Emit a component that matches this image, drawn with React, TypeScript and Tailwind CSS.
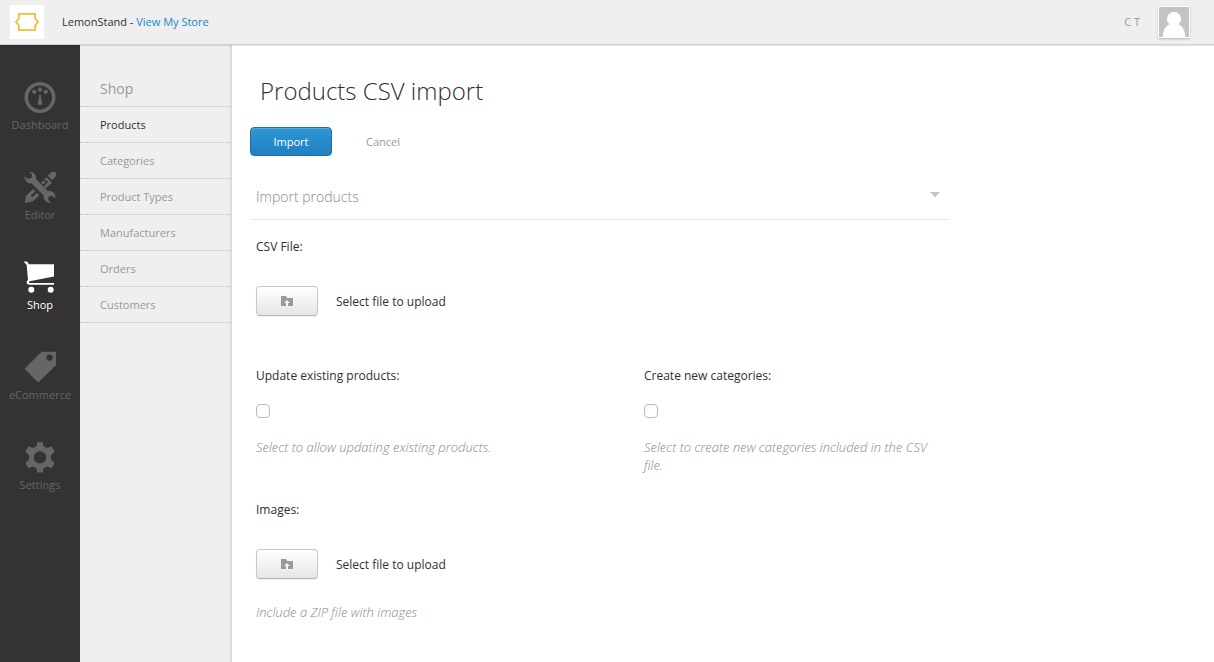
import { useState, type ReactNode } from "react";

function DashboardIcon() {
  return (
    <svg viewBox="0 0 32 32" className="size-8" fill="currentColor" aria-hidden="true">
      <circle cx="16" cy="16.500" r="13.700" fill="none" stroke="currentColor" strokeWidth="3.600" />
      <circle cx="10.200" cy="10.800" r="2.100" />
      <circle cx="16" cy="8.600" r="2.100" />
      <circle cx="21.800" cy="10.800" r="2.100" />
      <path d="M15.300 13.500h1.400l1.800 10.300h-5z" />
    </svg>
  );
}

function EditorIcon() {
  return (
    <svg viewBox="0 0 32 32" className="size-8" fill="currentColor" aria-hidden="true">
      <path d="M5 .8C10 .6 12.800 4.500 12 8L24.200 20.200C28.500 19.300 32.200 22.500 31.400 27.600L28.200 24.700 24.700 25.700 24 28.900 27.200 31.600C22 32.400 18.800 28.300 19.700 24.500L7.500 12.300C3.800 13 .2 9.600.6 5L3.900 8 7.300 7.100 8.100 3.800z" />
      <path d="M9 18L11.200 20.200 6.700 24.700 8.300 26.300 12.800 21.800 15.300 24.300 9 30.200.6 32 2.200 24.800z" />
      <path d="M17 11.400L19.200 9.200 21.400 11.400 22.400 10.400 20.200 8.200 22.400 6 28 11.600 21.800 17.200 19.800 15.200 24.200 10.800 23 9.600 19.200 13.600z" />
      <path d="M23.700 4.700L26.400 2C28.200.5 32 .5 32 1.700c.3 1.700 0 3.700-1.200 4.900L29.300 8.500 27.600 8.700z" />
    </svg>
  );
}

function CartIcon() {
  return (
    <svg viewBox="0 0 32 32" className="size-8" fill="currentColor" aria-hidden="true">
      <path d="M.5.300C3 .5 4.400 1.200 4.700 3.200H30v12.200L5.700 20.200c-1.200 1-.8 1.900.3 1.900h24v1.700H5.500c-3 0-3.800-3.100-1.500-4.700L2.700 4.500C2.500 3 1.700 2.400.4 2.100z" />
      <circle cx="7.300" cy="28.800" r="3" />
      <circle cx="26.700" cy="28.800" r="3" />
    </svg>
  );
}

function TagIcon() {
  return (
    <svg viewBox="0 0 32 32" className="size-8" fill="currentColor" aria-hidden="true">
      <path fillRule="evenodd" d="M17.500.8H32v13.400L14.200 31.600.5 17.800zM25.600 3.500a3.100 3.100 0 1 0 0 6.200 3.100 3.100 0 0 0 0-6.200z" />
    </svg>
  );
}

function GearIcon() {
  return (
    <svg viewBox="0 0 32 32" className="size-8" fill="currentColor" aria-hidden="true">
      <path
        fillRule="evenodd"
        d="M13.400 1.100h5.200l.8 3.500c.5 1.400 2.800 2.700 4.300 2.200l4-1.300 3 5.200-3 2.700c-1.300 1.200-1.300 4.600 0 5.800l3 2.700-3 5.200-4-1.300c-1.500-.5-3.800.8-4.300 2.200l-.8 3.500h-5.200l-.8-3.500c-.5-1.400-2.800-2.700-4.300-2.200l-4 1.300-3-5.200 3-2.700c1.300-1.200 1.300-4.600 0-5.800l-3-2.700 3-5.200 4 1.300c1.500.5 3.800-.8 4.300-2.200zM16 10.200a6.200 6.200 0 1 0 0 12.400 6.200 6.200 0 0 0 0-12.400z"
      />
    </svg>
  );
}

function FolderUploadIcon() {
  return (
    <svg viewBox="0 0 12 11" width="12" height="11" aria-hidden="true">
      <path d="M0 0h5l1 2h6v8H0z" fill="#999" />
      <path d="M6 4l3 3H7v3H5V7H3z" fill="#f4f4f4" />
    </svg>
  );
}

const mainItems: { label: string; icon: ReactNode }[] = [
  { label: "Dashboard", icon: <DashboardIcon /> },
  { label: "Editor", icon: <EditorIcon /> },
  { label: "Shop", icon: <CartIcon /> },
  { label: "eCommerce", icon: <TagIcon /> },
  { label: "Settings", icon: <GearIcon /> },
];

const shopItems = ["Products", "Categories", "Product Types", "Manufacturers", "Orders", "Customers"];

function UploadField({ id, label }: { id: string; label: string }) {
  return (
    <div role="group" aria-labelledby={id}>
      <h3 id={id} className="text-xs leading-[18px]">{label}</h3>
      <div className="mt-[30px] flex items-center gap-[18px]">
        <button
          type="button"
          aria-label="Select file to upload"
          className="flex h-[30px] w-[62px] items-center justify-center rounded border border-[#c8c8c8] border-b-[#b4b4b4] bg-linear-to-b from-white to-[#e6e6e6] shadow-[0_1px_1px_rgba(0,0,0,0.06)]"
        >
          <FolderUploadIcon />
        </button>
        <span className="pt-0.5 text-xs leading-4">Select file to upload</span>
      </div>
    </div>
  );
}

function CheckField({ id, label, hint }: { id: string; label: string; hint: string }) {
  return (
    <div>
      <label htmlFor={id} className="block text-xs leading-4">{label}</label>
      <input
        id={id}
        type="checkbox"
        className="mt-5 block size-3.5 appearance-none rounded border border-[#bbb] bg-white checked:bg-[#2183c4]"
      />
      <p className="mt-5 text-[13px] leading-[18px] font-light text-[#888] italic">{hint}</p>
    </div>
  );
}

export default function App() {
  const [open, setOpen] = useState(true);
  return (
    <div className="flex min-h-screen flex-col bg-white font-['Open_Sans',sans-serif] text-[#303030]">
      <header className="z-10 flex h-[45px] items-center border-b border-[#d0d0d0] bg-[#efefef] pr-6 pl-2.5 shadow-[0_1px_1px_rgba(0,0,0,0.1)]">
        <div className="flex size-[34px] items-center justify-center bg-white">
          <svg viewBox="0 0 24 20" width="24" height="20" fill="none" stroke="#f0bf35" strokeWidth="1.800" aria-hidden="true">
            <path d="M3.900 1.900h16.200v4.600L23 10l-2.900 3.500v4.600H3.900v-4.600L1 10l2.900-3.500z" />
          </svg>
        </div>
        <p className="ml-[18px] text-[11px] leading-4">
          LemonStand - <a href="#store" className="text-[#1489cc]">View My Store</a>
        </p>
        <span className="ml-auto text-[11px] leading-4 text-[#999]">C T</span>
        <svg viewBox="0 0 32 32" className="ml-[18px] size-8 shadow-[0_1px_2px_rgba(0,0,0,0.25)]" aria-hidden="true">
          <path d="M0 0h32v32H0z" fill="#fff" />
          <path d="M1 1h30v30H1z" fill="#c3c3c3" />
          <path d="M16 6a7 7 0 0 1 4.500 12.300C24.500 20 27 24 27.300 31H4.700C5 24 7.500 20 11.500 18.300A7 7 0 0 1 16 6z" fill="#fff" />
        </svg>
      </header>

      <div className="flex grow">
        <nav aria-label="Main" className="w-20 shrink-0 bg-[#333] pt-9">
          <ul className="flex flex-col gap-[38px]">
            {mainItems.map((item) => (
              <li key={item.label}>
                <a
                  href={"#" + item.label.toLowerCase()}
                  className={
                    "flex flex-col items-center gap-1 text-[11px] leading-4 " +
                    (item.label === "Shop" ? "text-white" : "text-[#666]")
                  }
                >
                  {item.icon}
                  {item.label}
                </a>
              </li>
            ))}
          </ul>
        </nav>

        <nav aria-label="Shop" className="w-[152px] shrink-0 border-r-2 border-[#dcdcdc] bg-[#efefef] pt-[26px]">
          <h2 className="flex h-9 items-center border-b border-dotted border-[#bbb] pl-5 text-sm text-[#999]">Shop</h2>
          <ul>
            {shopItems.map((item) => (
              <li key={item} className="border-b border-dotted border-[#bbb]">
                <a
                  href={"#" + item.toLowerCase().replace(" ", "-")}
                  className={
                    "block pt-2.5 pb-[9px] pl-5 text-[11px] leading-4 " +
                    (item === "Products" ? "text-[#303030]" : "text-[#999]")
                  }
                >
                  {item}
                </a>
              </li>
            ))}
          </ul>
        </nav>

        <main className="min-w-0 grow px-[18px] pt-[30px]">
          <form className="max-w-[700px]" onSubmit={(e) => e.preventDefault()}>
            <h1 className="pl-2.5 text-2xl leading-8 font-light">Products CSV import</h1>
            <div className="mt-5 flex items-center gap-[34px] text-[11px] leading-4">
              <button
                type="submit"
                className="h-[29px] w-[82px] rounded border border-[#1d6fa8] bg-linear-to-b from-[#2d97d3] to-[#2080c2] pt-px text-white shadow-[inset_0_1px_0_rgba(255,255,255,0.2)]"
              >
                Import
              </button>
              <a href="#products" className="pt-px text-[#999]">Cancel</a>
            </div>

            <h2 className="mt-[18px] border-b border-[#ebebeb]">
              <button
                type="button"
                aria-expanded={open}
                onClick={() => setOpen(!open)}
                className="flex h-[45px] w-full items-center justify-between pr-2.5 pl-1.5 text-sm font-light text-[#888]"
              >
                Import products
                <svg viewBox="0 0 10 6" width="10" height="6" className="mb-1" aria-hidden="true">
                  <path d="M0 0h10L5 5.500z" fill="#c4c4c4" />
                </svg>
              </button>
            </h2>

            {open && (
              <div className="px-1.5 pt-[18px] pb-8">
                <UploadField id="csv-file" label="CSV File:" />
                <div className="mt-[52px] grid grid-cols-2 gap-x-[88px]">
                  <CheckField id="update" label="Update existing products:" hint="Select to allow updating existing products." />
                  <CheckField id="create" label="Create new categories:" hint="Select to create new categories included in the CSV file." />
                </div>
                <div className="mt-[27px]">
                  <UploadField id="images" label="Images:" />
                  <p className="mt-6 text-[13px] leading-[18px] font-light text-[#888] italic">Include a ZIP file with images</p>
                </div>
              </div>
            )}
          </form>
        </main>
      </div>
    </div>
  );
}
